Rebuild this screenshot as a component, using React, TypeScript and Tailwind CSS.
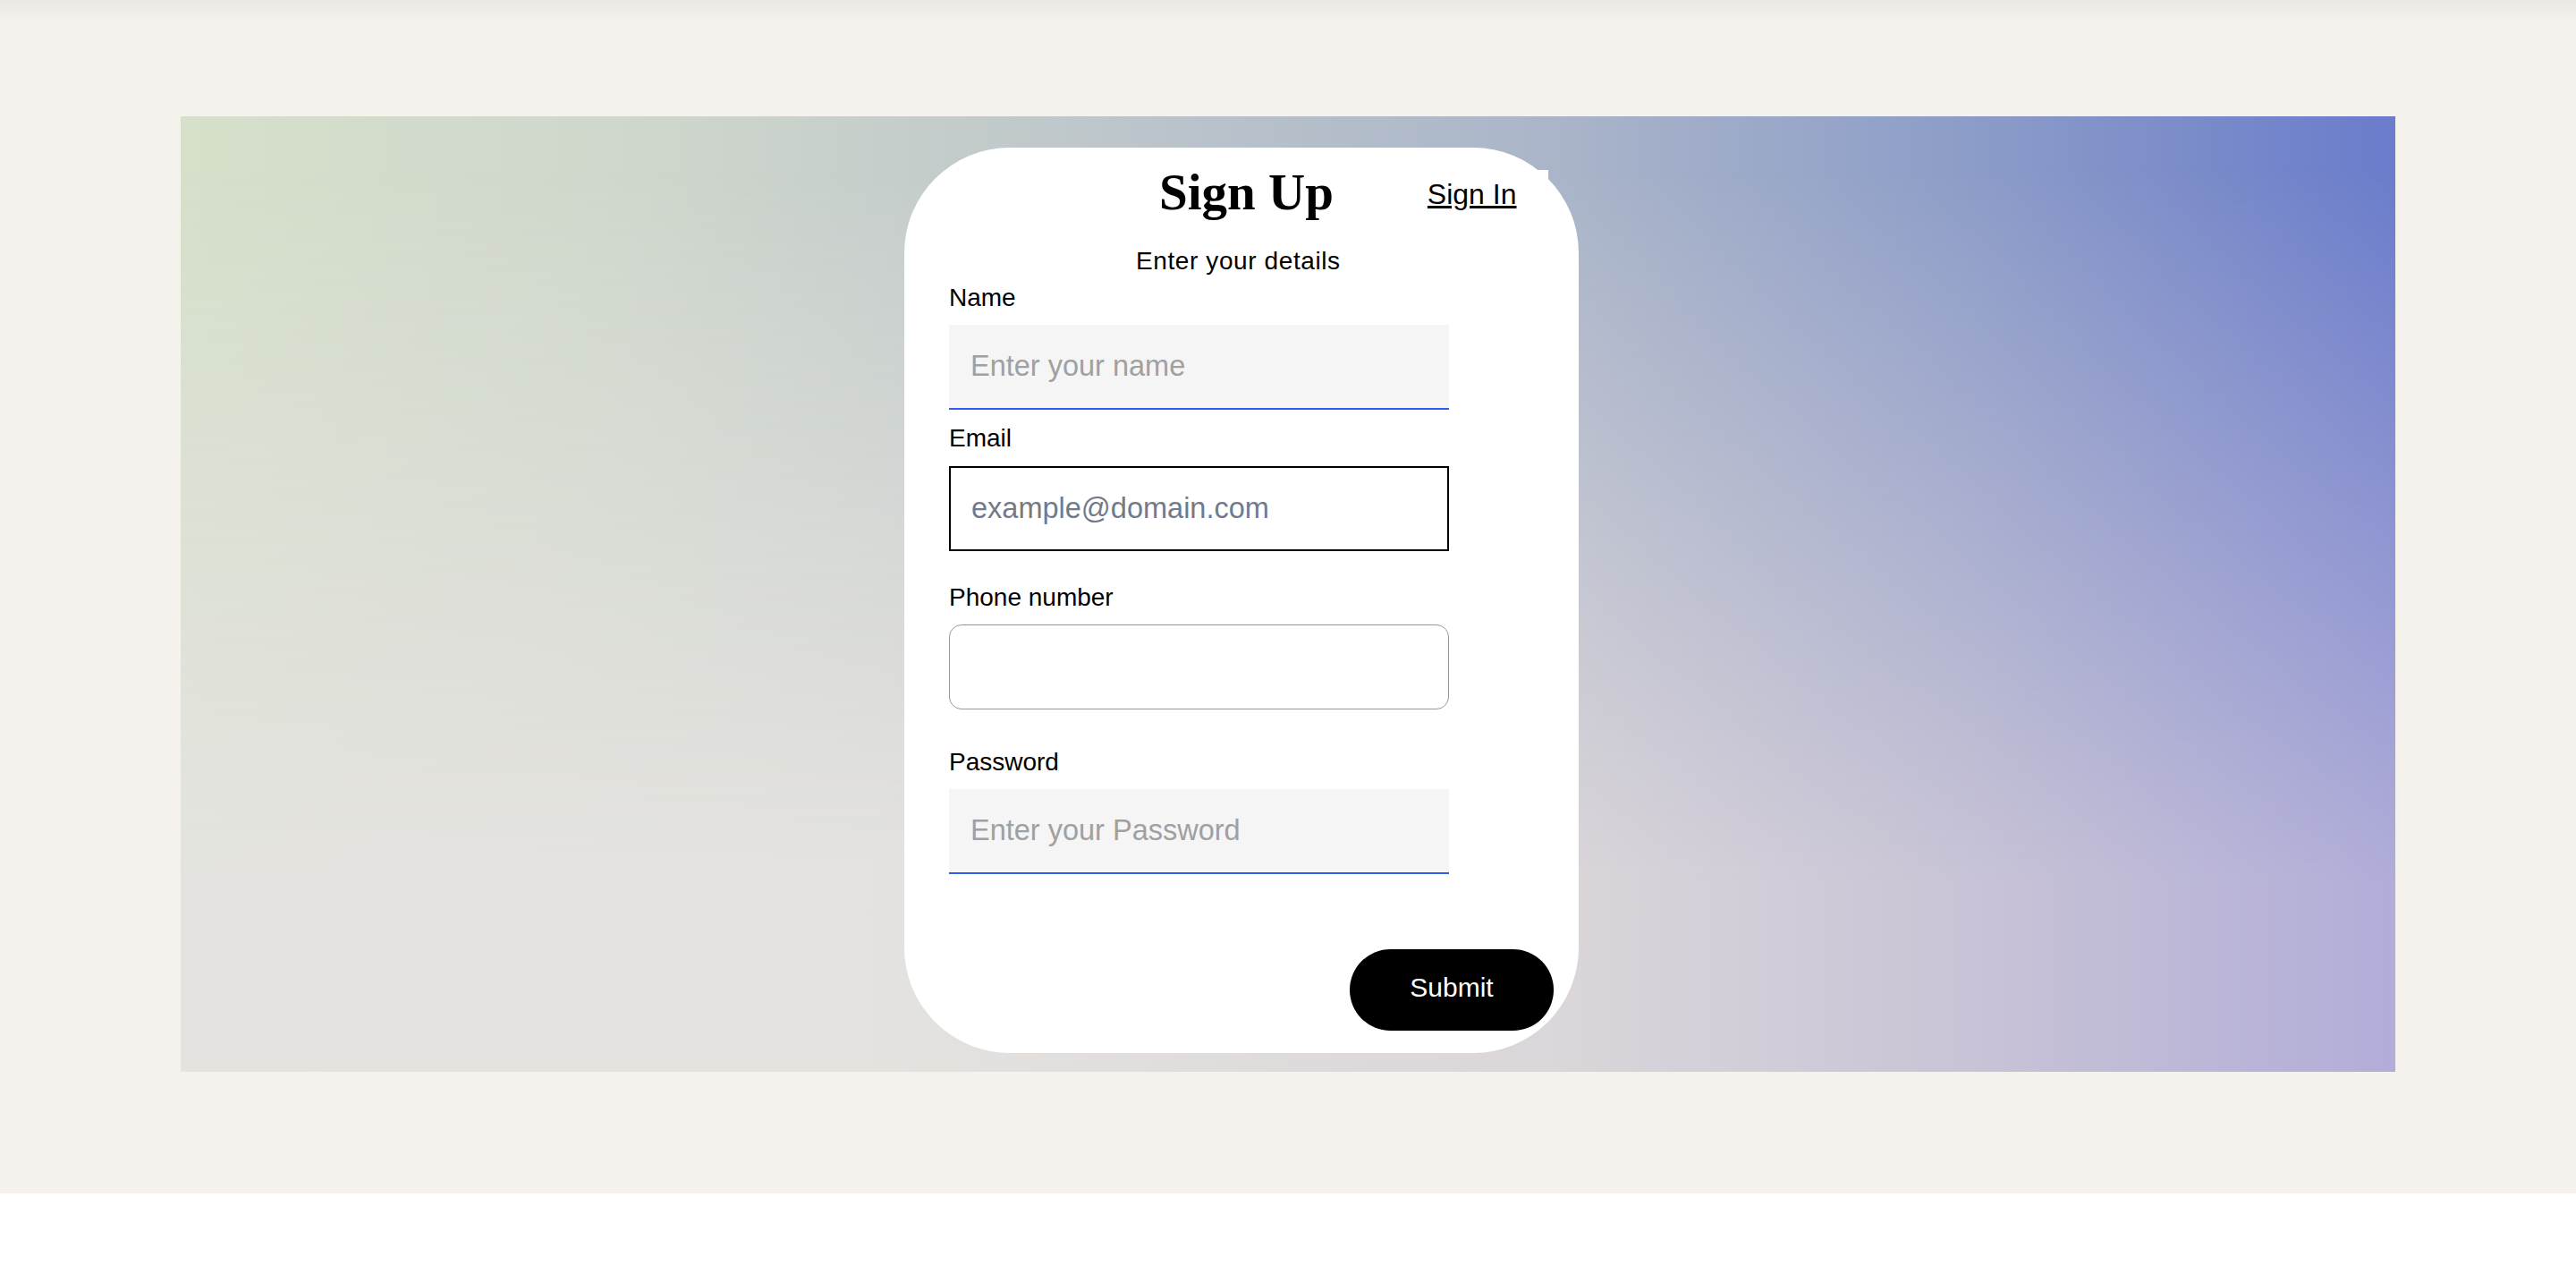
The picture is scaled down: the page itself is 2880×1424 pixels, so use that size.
import React from "react";

const sans = "font-['Liberation_Sans',Arial,sans-serif]";

function Field({
  label,
  labelClass,
  inputClass,
  placeholder,
  type = "text",
}: {
  label: string;
  labelClass: string;
  inputClass: string;
  placeholder?: string;
  type?: string;
}) {
  return (
    <>
      <label className={`block text-[28px] leading-[32px] text-black ${labelClass}`}>{label}</label>
      <input
        type={type}
        placeholder={placeholder}
        className={`block w-[559px] h-[95px] text-[32.5px] outline-none ${inputClass}`}
      />
    </>
  );
}

export default function App() {
  return (
    <div className={`min-h-screen bg-white ${sans}`}>
      <div className="h-[1334px] bg-[#f5f2ed]">
        <div className="h-[26px] bg-[linear-gradient(to_bottom,#ece8e5,#f5f2ed)]" />

        <div className="relative mt-[104px] ml-[202px] w-[2476px] h-[1068px] pl-[809px] pt-[35px] bg-[linear-gradient(to_right,#d6e0ca_0%,#cfd7cc_20%,#c6cecb_32%,#aab5c9_62%,#8c9cc8_81%,#6a7ccb_100%)]">
          <div className="absolute inset-0 bg-[linear-gradient(to_right,#e4e3df_0%,#e4e2df_32%,#dbd6d9_62%,#c8c3d6_81%,#b1add8_100%)] [mask-image:linear-gradient(to_bottom,transparent_5%,black_80%)]" />

          <form
            className="relative z-10 flex flex-col items-start w-[754px] h-[1012px] rounded-[118px] bg-white pt-[18px] pl-[50px] pr-[28px]"
            onSubmit={(e) => e.preventDefault()}
          >
            <div className="flex items-start">
              <h1 className="ml-[235px] font-['Liberation_Serif','Times_New_Roman',serif] font-bold text-[57px] leading-[64px] text-black">
                Sign Up
              </h1>
              <div className="ml-[89px] mt-[7px] w-[151px] h-[50px] bg-white pl-[16px] pt-[9px]">
                <a href="#" className="text-[32px] leading-[36px] text-black underline">
                  Sign In
                </a>
              </div>
            </div>

            <p className="ml-[209px] mt-[29px] text-[28px] leading-[32px] tracking-[0.6px] text-black">
              Enter your details
            </p>

            <Field
              label="Name"
              labelClass="mt-[9px]"
              placeholder="Enter your name"
              inputClass="mt-[14px] bg-[#f5f5f5] border-b-[2.5px] border-[#2d5cf0] pl-[24px] placeholder:text-[#a0a0a0]"
            />
            <Field
              label="Email"
              labelClass="mt-[16px]"
              type="email"
              placeholder="example@domain.com"
              inputClass="mt-[15px] h-[94px] bg-white border-2 border-black pl-[23px] placeholder:text-[#727a8a]"
            />
            <Field
              label="Phone number"
              labelClass="mt-[36px]"
              type="tel"
              inputClass="mt-[14px] h-[94px] bg-white border-[1.5px] border-[#999999] rounded-[14px] pl-[23px]"
            />
            <Field
              label="Password"
              labelClass="mt-[43px]"
              type="password"
              placeholder="Enter your Password"
              inputClass="mt-[14px] bg-[#f5f5f5] border-b-[2.5px] border-[#2d5cf0] pl-[24px] placeholder:text-[#a0a0a0]"
            />

            <button
              type="submit"
              className="self-end mt-[84px] w-[228px] h-[91px] rounded-full bg-black text-white text-[30px] leading-[34px] pb-[6px]"
            >
              Submit
            </button>
          </form>
        </div>
      </div>
    </div>
  );
}
